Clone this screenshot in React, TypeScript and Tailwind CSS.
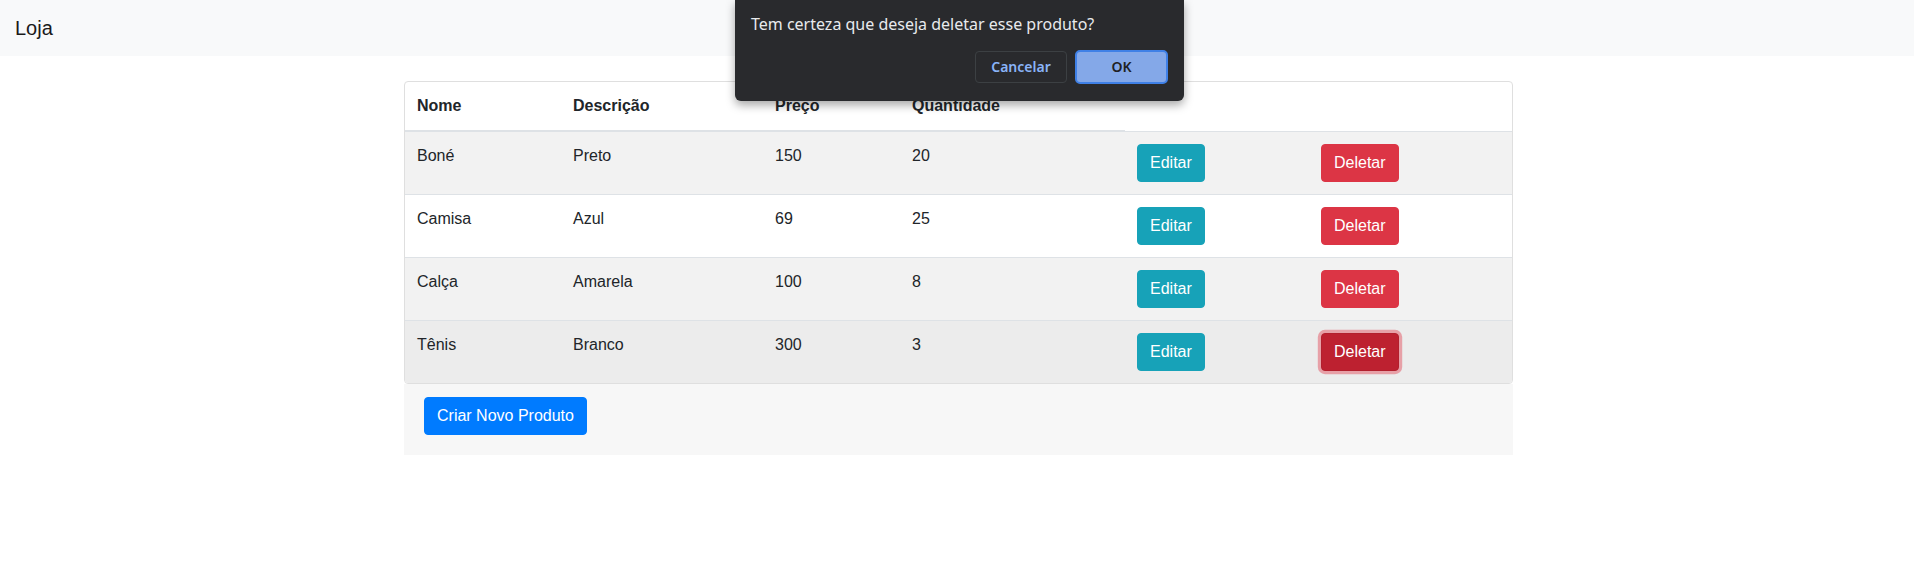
import React from "react";

type Produto = {
    nome: string;
    descricao: string;
    preco: number;
    quantidade: number;
};

const produtos: Produto[] = [
    { nome: "Boné", descricao: "Preto", preco: 150, quantidade: 20 },
    { nome: "Camisa", descricao: "Azul", preco: 69, quantidade: 25 },
    { nome: "Calça", descricao: "Amarela", preco: 100, quantidade: 8 },
    { nome: "Tênis", descricao: "Branco", preco: 300, quantidade: 3 },
];

function ConfirmDialog() {
    return (
        <div className="absolute top-0 left-[735px] w-[449px] h-[101px] bg-[#292a2d] rounded-b-[6px] shadow-[0_4px_10px_rgba(0,0,0,0.35)] font-['Noto_Sans',sans-serif]">
            <p className="pl-[16px] pt-[14px] text-[16px] leading-[20px] text-[#e8eaed]">Tem certeza que deseja deletar esse produto?</p>
            <div className="flex justify-end gap-[8px] pr-[16px] pt-[16px]">
                <button className="h-[32px] w-[92px] mt-[1px] rounded-[4px] border border-[#3c4043] text-[14px] font-semibold text-[#8ab4f8]">Cancelar</button>
                <button className="h-[34px] w-[93px] rounded-[5px] border-2 border-[#3f80e6] bg-[#84a8e8] text-[14px] font-semibold text-[#202124]">OK</button>
            </div>
        </div>
    );
}

function ProdutoRow({ produto, index }: { produto: Produto; index: number }) {
    const striped = index % 2 === 0;
    const hovered = index === 3;
    const rowBg = hovered ? "bg-[#ececec]" : striped ? "bg-[#f2f2f2]" : "bg-white";

    return (
        <tr className={rowBg}>
            <td className="border-t border-[#dee2e6] p-3 align-top">{produto.nome}</td>
            <td className="border-t border-[#dee2e6] p-3 align-top">{produto.descricao}</td>
            <td className="border-t border-[#dee2e6] p-3 align-top">{produto.preco}</td>
            <td className="border-t border-[#dee2e6] p-3 align-top">{produto.quantidade}</td>
            <td className="border-t border-[#dee2e6] p-3 align-top">
                <button className="h-[38px] rounded-[4px] border border-[#17a2b8] bg-[#17a2b8] px-3 text-white">Editar</button>
            </td>
            <td className="border-t border-[#dee2e6] p-3 align-top">
                {hovered ? (
                    <button className="h-[38px] rounded-[4px] border border-[#b21f2d] bg-[#bd2130] px-3 text-white shadow-[0_0_0_3.2px_rgba(225,83,97,0.5)]">Deletar</button>
                ) : (
                    <button className="h-[38px] rounded-[4px] border border-[#dc3545] bg-[#dc3545] px-3 text-white">Deletar</button>
                )}
            </td>
        </tr>
    );
}

export default function App() {
    return (
        <div className="relative min-h-[576px] bg-white font-['Liberation_Sans',Arial,sans-serif] text-[16px] leading-[24px] text-[#212529]">
            <nav className="flex h-[56px] items-center bg-[#f8f9fa] px-[15px]">
                <span className="text-[20px] leading-[30px] text-[#1a1a1a]">Loja</span>
            </nav>

            <div className="mt-[25px] flex justify-center pl-[3px]">
                <div className="w-[1109px]">
                    <div className="overflow-hidden rounded-[4px] border border-[#dfdfdf]">
                        <table className="w-full table-fixed border-collapse text-left">
                            <colgroup>
                                <col className="w-[156px]" />
                                <col className="w-[202px]" />
                                <col className="w-[137px]" />
                                <col className="w-[225px]" />
                                <col className="w-[184px]" />
                                <col />
                            </colgroup>
                            <thead>
                                <tr>
                                    <th className="border-b-2 border-[#dee2e6] p-3 font-bold">Nome</th>
                                    <th className="border-b-2 border-[#dee2e6] p-3 font-bold">Descrição</th>
                                    <th className="border-b-2 border-[#dee2e6] p-3 font-bold">Preço</th>
                                    <th className="border-b-2 border-[#dee2e6] p-3 font-bold">Quantidade</th>
                                </tr>
                            </thead>
                            <tbody>
                                {produtos.map((p, i) => (
                                    <ProdutoRow key={p.nome} produto={p} index={i} />
                                ))}
                            </tbody>
                        </table>
                    </div>
                    <div className="bg-[#f7f7f7] pb-[20px] pl-5 pt-[13px]">
                        <button className="h-[38px] rounded-[4px] border border-[#007bff] bg-[#007bff] px-3 text-white">Criar Novo Produto</button>
                    </div>
                </div>
            </div>

            <ConfirmDialog />
        </div>
    );
}
